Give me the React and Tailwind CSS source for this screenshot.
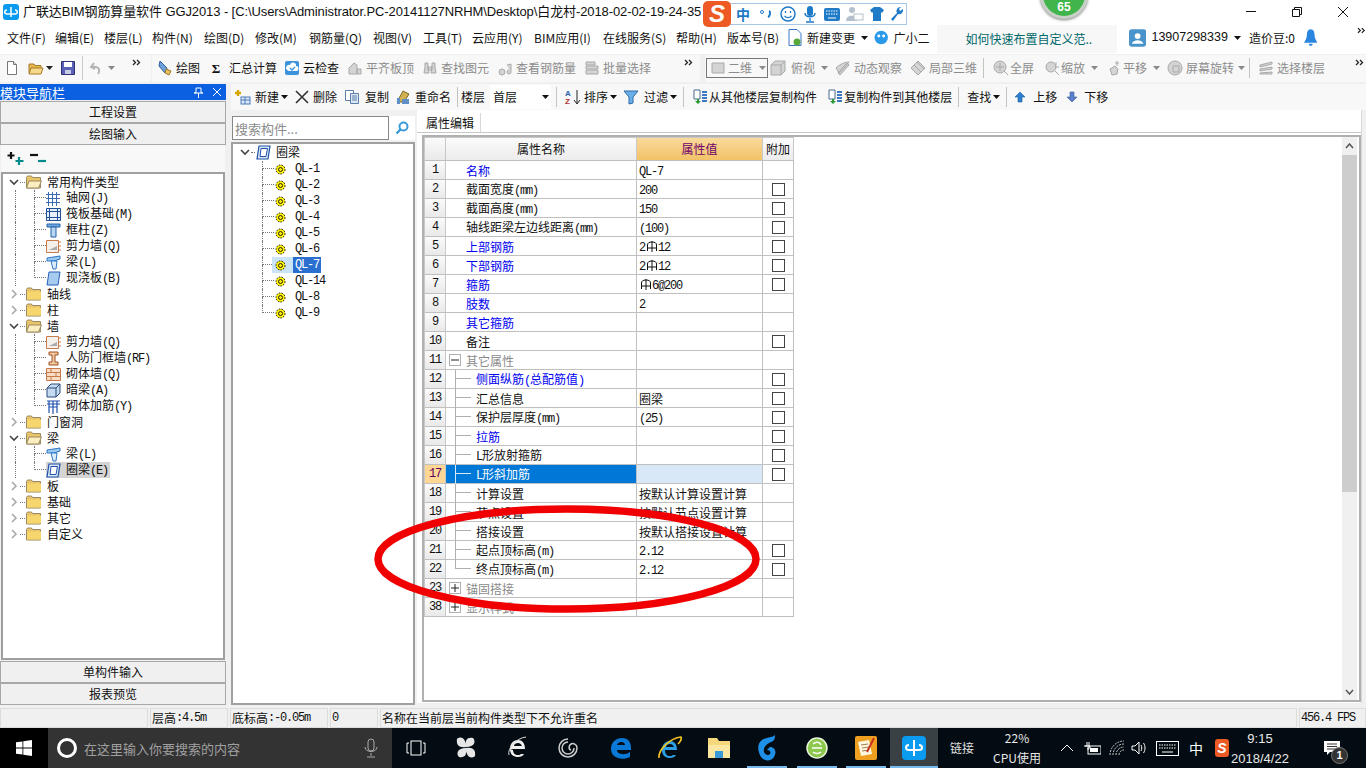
import { Fragment } from 'react'

// ascii runs in the tree and grid are a bitmap-like 6px mono
function Sim({ text }) {
  return text.split(/([\x20-\x7e]+)/).map((part, i) =>
    /^[\x20-\x7e]+$/.test(part)
      ? <span key={i} className="font-['Liberation_Mono'] text-[12px] tracking-[-1.2px] whitespace-pre">{part}</span>
      : <Fragment key={i}>{part}</Fragment>
  )
}

const Arrow = ({ className = '' }) => (
  <svg width="7" height="4" viewBox="0 0 7 4" className={`shrink-0 ${className}`}><path d="M0 0h7L3.5 4z" fill="currentColor" /></svg>
)
const More = ({ className = '' }) => (
  <svg width="9" height="7" viewBox="0 0 9 7" className={className}><path d="M1 1l2.5 2.5L1 6M5 1l2.5 2.5L5 6" fill="none" stroke="#222" strokeWidth="1.3" /></svg>
)
const Sep = ({ className = '' }) => <span className={`h-[20px] w-px bg-[#c4c4c4] shrink-0 ${className}`} />

// toolbar icons
const Ic = ({ children, s = 16 }) => <svg width={s} height={s} viewBox="0 0 16 16" className="shrink-0">{children}</svg>
const NewDoc = () => <Ic><path d="M3.5 1.5h6l3 3v10h-9z" fill="#fff" stroke="#777" /><path d="M9.5 1.5v3h3" fill="#ddd" stroke="#777" /></Ic>
const OpenDir = () => <Ic><path d="M1 4h5l1 1.5h6V13H1z" fill="#e6b64c" stroke="#a67c2a" /><path d="M3 8h12l-2 6H1z" fill="#f7d98b" stroke="#a67c2a" /></Ic>
const Save = () => <Ic><path d="M1.5 1.5h13v13h-13z" fill="#5a62b8" stroke="#2e3378" /><path d="M4 2h8v5H4z" fill="#fff" /><path d="M5 10h6v4H5z" fill="#c8cbe6" /></Ic>
const Undo = () => <Ic><path d="M5 3L2 7l4 2M3 7c6-1 9 2 6 7" fill="none" stroke="#b5b5b5" strokeWidth="2" /></Ic>
const Draw = () => <Ic><path d="M3 1l7 7-2 5-6-7z" fill="#6f9fd8" stroke="#2f5f9e" /><path d="M9 9l5 2-2 4-4-2z" fill="#e8c060" stroke="#9b7a2a" /></Ic>
const Cloud = () => <Ic><rect x="1" y="1" width="14" height="14" rx="2" fill="#3a93dc" /><path d="M3 10a3 3 0 013-5 3 3 0 016 1 2.500 2.500 0 010 5H5z" fill="#fff" /><path d="M6 8l2 2 3-3" fill="none" stroke="#3a93dc" strokeWidth="1.4" /></Ic>
const Gray = ({ d }) => <Ic><path d={d} fill="#d4d4d4" stroke="#a9a9a9" /></Ic>
const G = {
  align: 'M2 14V8l5-5 3 2v9zM10 9h4v5h-4z',
  bino: 'M3 3h3v4l1 6H2l1-6zM10 3h3v4l1 6H9l1-6zM6 7h4v3H6z',
  look: 'M2 12a3 3 0 116 0 3 3 0 01-6 0zM10 5l4-1v8a2 2 0 11-2-2',
  batch: 'M2 2h9v3H2zM2 6h12v3H2zM2 10h12v4H2z',
  flat: 'M2 3h12v10H2z',
  cube: 'M1 5l4-4h10v10l-4 4H1zM1 5h10v10M11 5l4-4',
  orbit: 'M3 13L12 3l2 2-9 10zM1 8c4-4 9-6 13-6-3 4-6 8-10 11z',
  local: 'M8 1l7 7-7 7-7-7zM4 5l7 7M7 2l7 7',
  full: 'M7 1a6 6 0 110 12A6 6 0 017 1zM7 3v8M3 7h8M11 11l4 4',
  zoom: 'M7 2a5 5 0 110 10A5 5 0 017 2zM11 11l4 4M12 2v3M11 7h4',
  pan: 'M11 1v5M9 3h4M4 9l5-3 3 3-1 5-5 1z',
  rot: 'M8 1a7 7 0 110 14A7 7 0 018 1zM6 6h6v6H6z',
  floor: 'M2 5l12-3v2L2 7zM2 9l12-2v2L2 11zM2 13l12-1v2H2z',
}
const AddComp = () => <Ic><path d="M3 1v6M0 4h6" stroke="#d8a400" strokeWidth="2.400" /><rect x="6" y="8" width="9" height="7" fill="#dfe9f7" stroke="#4a7ab8" /><path d="M6 11h9M10 8v7" stroke="#4a7ab8" /></Ic>
const Copy = () => <Ic><path d="M1.500 1.500h8v10h-8z" fill="#fff" stroke="#5b7fa8" /><path d="M6.500 4.500h8v10h-8z" fill="#dce8f5" stroke="#5b7fa8" /><path d="M8 7h5M8 9h5M8 11h5" stroke="#5b7fa8" /></Ic>
const Rename = () => <Ic><path d="M2 13l6-11 6 3-5 8z" fill="#d2b050" stroke="#7b6a2a" /><path d="M2 9h3v6H2zM7 10h7v5H7z" fill="#5f8fc8" /></Ic>
const Sort = () => <Ic><text x="0" y="7" fontSize="8" fontWeight="700" fill="#2a5fb0" fontFamily="Liberation Sans">A</text><text x="0" y="15" fontSize="8" fontWeight="700" fill="#b03030" fontFamily="Liberation Sans">Z</text><path d="M12 1v13M9 11l3 4 3-4" fill="none" stroke="#222" /></Ic>
const Filter = () => <Ic><path d="M1 2h14L10 8v6l-4 1V8z" fill="#6ab0e8" stroke="#2c6aa8" /></Ic>
const CopyFloor = () => <Ic><path d="M2 1h6v9H2z" fill="#fff" stroke="#4a6a90" /><path d="M3 12l3 3 3-3H7v-2H5v2z" fill="#2f9a3c" /><path d="M10 3h5M10 6h5M10 9h5M10 12h5" stroke="#3c78c4" strokeWidth="2" /></Ic>
const Up = () => <Ic><path d="M8 3l5 5h-3v5H6V8H3z" fill="#2d7fd0" stroke="#1c5a9c" strokeWidth=".6" /></Ic>
const Down = () => <Ic><path d="M6 3h4v5h3l-5 5-5-5h3z" fill="#5c80cc" stroke="#3a5a9c" strokeWidth=".6" /></Ic>

// tree icons
const Folder = ({ open }) => (
  <svg width="16" height="14" viewBox="0 0 16 14" className="shrink-0">
    <path d="M.500 2.500l1-1.500h4l1 1.500h8V13H.500z" fill="#e8c46a" stroke="#9c8a60" />
    {open ? <path d="M3 6h12.500l-3 7H.500z" fill="#fbeec0" stroke="#9c8a60" /> : <path d="M1 4.500h14V12.500H1z" fill="#f8d66e" />}
  </svg>
)
const Chevron = ({ open }) => (
  <svg width="10" height="10" viewBox="0 0 10 10" className="shrink-0">
    {open ? <path d="M1 3l4 4 4-4" fill="none" stroke="#444" strokeWidth="1.600" /> : <path d="M3 1l4 4-4 4" fill="none" stroke="#aaa" strokeWidth="1.600" />}
  </svg>
)
const T = ({ children }) => <svg width="15" height="15" viewBox="0 0 15 15" className="shrink-0">{children}</svg>
const TI = {
  grid: <T><path d="M0 3.500h14M0 7.500h14M0 11.500h14M2.500 1v14M6.500 1v14M10.500 1v14" stroke="#3a6ab0" strokeWidth="1" /></T>,
  raft: <T><path d="M.500 1.500h14v12H.500zM3.500 1.500v12M11.500 1.500v12M.500 4.500h14M.500 10.500h14" fill="#e5eef9" stroke="#1f4f96" /></T>,
  col: <T><path d="M1 1h13v3H1z" fill="#6fa8e0" stroke="#2560a8" /><path d="M5 4h5v10H5z" fill="#b8d6f2" stroke="#2560a8" /></T>,
  wall: <T><path d="M.500 1.500h12v12H.500z" fill="#f4f0ea" stroke="#c87a4a" /><path d="M3 11h8V7z" fill="#aaa" /><path d="M13 3h2M13 7h2M13 11h2" stroke="#c87a4a" /></T>,
  beam: <T><path d="M1 3l13-2v3L8 6l-7 0z" fill="#9cc8ee" stroke="#2c78c8" /><path d="M5 6h6l-1 8H7z" fill="#dcecfa" stroke="#2c78c8" /></T>,
  slab: <T><path d="M3 1h11l-2 13H1z" fill="#a8ccf0" stroke="#2560b8" /></T>,
  door: <T><path d="M3 1h9v3H9v7h3v3H3v-3h3V4H3z" fill="#f0c8a0" stroke="#a05020" /></T>,
  brick: <T><path d="M.500 1.500h14v12H.500z" fill="#f8dcc4" stroke="#c87a4a" /><path d="M.500 5.500h14M.500 9.500h14M5 1.500v4M10 5.500v4M5 9.500v4" stroke="#c87a4a" /></T>,
  dark: <T><path d="M1 5l4-4h9v9l-4 4H1z" fill="#c4daf0" stroke="#2a4a78" /><path d="M1 5h9v9M10 5l4-4" fill="none" stroke="#2a4a78" /></T>,
  rebar: <T><path d="M1 2h13M7 2v13M3 2v6h8V2M1 5h13M3 8v6M11 8v6" fill="none" stroke="#1f50b0" strokeWidth="1.200" /></T>,
  ring: <T><path d="M3 1h11l-2 13H1z" fill="#d8e8f8" stroke="#2050a8" strokeWidth="1.200" /><path d="M5 3.500h6.500L10 11.500H4z" fill="#fff" stroke="#2050a8" /></T>,
}

const Gear = () => (
  <svg width="11" height="11" viewBox="0 0 11 11" className="shrink-0">
    <circle cx="5.500" cy="5.500" r="4.500" fill="#fff000" stroke="#111" strokeDasharray="1.500 1.200" />
    <circle cx="5.500" cy="5.500" r="2" fill="#fff000" stroke="#222" />
  </svg>
)

function Tick({ last }) {
  return (
    <span className="flex flex-col h-full shrink-0 w-[12px]">
      <span className="h-1/2 border-l border-b border-dotted border-[#777]" />
      <span className={`h-1/2 border-dotted border-[#777] ${last ? '' : 'border-l'}`} />
    </span>
  )
}

const navTree = [
  { t: '常用构件类型', open: true, kids: [['轴网(J)', 'grid'], ['筏板基础(M)', 'raft'], ['框柱(Z)', 'col'], ['剪力墙(Q)', 'wall'], ['梁(L)', 'beam'], ['现浇板(B)', 'slab']] },
  { t: '轴线' },
  { t: '柱' },
  { t: '墙', open: true, kids: [['剪力墙(Q)', 'wall'], ['人防门框墙(RF)', 'door'], ['砌体墙(Q)', 'brick'], ['暗梁(A)', 'dark'], ['砌体加筋(Y)', 'rebar']] },
  { t: '门窗洞' },
  { t: '梁', open: true, kids: [['梁(L)', 'beam'], ['圈梁(E)', 'ring', true]] },
  { t: '板' },
  { t: '基础' },
  { t: '其它' },
  { t: '自定义' },
]

function NavTree() {
  return navTree.map(p => (
    <Fragment key={p.t}>
      <div className="flex items-center h-4 pl-[6px]">
        <Chevron open={p.open} />
        <span className="w-[5px] h-px border-t border-dotted border-[#777] mx-[1px]" />
        <Folder open={p.open} />
        <span className="ml-[5px]">{p.t}</span>
      </div>
      {p.kids && p.kids.map(([t, ic, sel], i) => (
        <div key={t + i} className="flex items-center h-4 pl-[12px]">
          <span className="w-[19px] h-full border-l border-dotted border-[#777] shrink-0" />
          <Tick last={i === p.kids.length - 1} />
          <span className={`flex items-center h-4 pr-[2px] ${sel ? 'bg-[#d4d4d4]' : ''}`}>
            {TI[ic]}
            <span className="ml-[5px]"><Sim text={t} /></span>
          </span>
        </div>
      ))}
    </Fragment>
  ))
}

const qls = ['QL-1', 'QL-2', 'QL-3', 'QL-4', 'QL-5', 'QL-6', 'QL-7', 'QL-14', 'QL-8', 'QL-9']

// n, name, value, colour, checkbox, tree mode
const rows = [
  ['1', '名称', 'QL-7', 'b', 0],
  ['2', '截面宽度(mm)', '200', '', 1],
  ['3', '截面高度(mm)', '150', '', 1],
  ['4', '轴线距梁左边线距离(mm)', '(100)', '', 1],
  ['5', '上部钢筋', '2⌀12', 'b', 1],
  ['6', '下部钢筋', '2⌀12', 'b', 1],
  ['7', '箍筋', '⌀6@200', 'b', 1],
  ['8', '肢数', '2', 'b', 0],
  ['9', '其它箍筋', '', 'b', 0],
  ['10', '备注', '', '', 1],
  ['11', '其它属性', '', 'g', 0, 'minus'],
  ['12', '侧面纵筋(总配筋值)', '', 'b', 1, 'tree'],
  ['13', '汇总信息', '圈梁', '', 1, 'tree'],
  ['14', '保护层厚度(mm)', '(25)', '', 1, 'tree'],
  ['15', '拉筋', '', 'b', 1, 'tree'],
  ['16', 'L形放射箍筋', '', '', 1, 'tree'],
  ['17', 'L形斜加筋', '', 'sel', 1, 'tree'],
  ['18', '计算设置', '按默认计算设置计算', '', 0, 'tree'],
  ['19', '节点设置', '按默认节点设置计算', '', 0, 'tree'],
  ['20', '搭接设置', '按默认搭接设置计算', '', 0, 'tree'],
  ['21', '起点顶标高(m)', '2.12', '', 1, 'tree'],
  ['22', '终点顶标高(m)', '2.12', '', 1, 'end'],
  ['23', '锚固搭接', '', 'g', 0, 'plus'],
  ['38', '显示样式', '', 'g', 0, 'plus'],
]

function Rebar() {
  return <svg width="10" height="11" viewBox="0 0 10 11" className="inline-block align-[-1px] ml-[2px] mr-[1px]"><path d="M5 0v11M.500 4a4.500 3 0 019 0v3H.500zM.500 7v3M9.500 7v3" fill="none" stroke="#111" /></svg>
}

function Value({ text }) {
  if (text.includes('⌀')) {
    const [a, b] = text.split('⌀')
    return <><Sim text={a} /><Rebar /><Sim text={b} /></>
  }
  return <Sim text={text} />
}

function Row({ r }) {
  const [n, name, val, kind, check, mode] = r
  const sel = kind === 'sel'
  const nameColor = kind === 'b' ? 'text-[#0000f0]' : kind === 'g' ? 'text-[#8a8a8a]' : sel ? 'text-white' : 'text-[#111]'
  return (
    <div className="flex h-[19px] border-b border-[#c0c0c0]">
      <div className={`w-[21px] shrink-0 flex items-center justify-center border-r border-[#c8c8c8] text-[12px] ${sel ? 'bg-[#ffd694] text-[#5a0060]' : 'bg-gradient-to-b from-[#fbfbfb] to-[#e9e9e9]'}`}><Sim text={n} /></div>
      <div className={`w-[191px] shrink-0 flex items-center border-r border-[#c0c0c0] ${sel ? 'bg-[#0078d7]' : ''}`}>
        {mode === 'minus' || mode === 'plus' ? (
          <span className="w-[12px] h-[12px] ml-[3px] mr-[5px] border border-[#b0b0b0] bg-white flex items-center justify-center shrink-0">
            <svg width="8" height="8" viewBox="0 0 8 8"><path d={mode === 'minus' ? 'M0 4h8' : 'M0 4h8M4 0v8'} stroke="#222" /></svg>
          </span>
        ) : mode === 'tree' || mode === 'end' ? (
          <span className="flex flex-col w-[21px] h-[19px] shrink-0 ml-[9px]">
            <span className={`h-[9px] w-[16px] border-l border-b ${sel ? 'border-[#d8e8f6]' : 'border-[#b0b0b0]'}`} />
            <span className={`h-[10px] ${mode === 'end' ? '' : sel ? 'border-l border-[#d8e8f6]' : 'border-l border-[#b0b0b0]'}`} />
          </span>
        ) : <span className="w-[20px] shrink-0" />}
        <span className={`whitespace-nowrap mt-[2px] ${nameColor}`}><Sim text={name} /></span>
      </div>
      <div className={`w-[126px] shrink-0 flex items-center pl-[2px] border-r border-[#c0c0c0] whitespace-pre ${sel ? 'bg-[#d8e8f6]' : ''}`}><span className="mt-[2px]"><Value text={val} /></span></div>
      <div className="w-[31px] shrink-0 flex items-center justify-center border-r border-[#c0c0c0]">
        {check ? <span className="w-[13px] h-[13px] border border-[#444] bg-white" /> : null}
      </div>
    </div>
  )
}

const menu = [
  ['文件(F)', 'w-[48px]'], ['编辑(E)', 'w-[49px]'], ['楼层(L)', 'w-[48px]'], ['构件(N)', 'w-[52px]'], ['绘图(D)', 'w-[51px]'],
  ['修改(M)', 'w-[54px]'], ['钢筋量(Q)', 'w-[64px]'], ['视图(V)', 'w-[50px]'], ['工具(T)', 'w-[49px]'], ['云应用(Y)', 'w-[62px]'],
  ['BIM应用(I)', 'w-[69px]'], ['在线服务(S)', 'w-[73px]'], ['帮助(H)', 'w-[51px]'], ['版本号(B)', 'w-[61px]'],
]

const Tool = ({ icon, text, className = '', dim, gap = 'ml-[3px]' }) => (
  <span className={`flex items-center whitespace-nowrap shrink-0 ${className} ${dim ? 'text-[#8c8c8c]' : 'text-[#111]'}`}>
    {icon}<span className={gap}>{text}</span>
  </span>
)

const Btn = ({ children, className = '' }) => (
  <div className={`shrink-0 flex items-center justify-center border border-[#a8a8a8] bg-[#f0f0f0] ${className}`}>{children}</div>
)

function Sogou() {
  return (
    <div className="absolute left-[703px] top-0 h-[28px] flex items-center">
      <div className="absolute left-0 top-[1px] w-[28px] h-[26px] rounded-[5px] bg-[#ee5a24] flex items-center justify-center text-white font-bold italic text-[24px] leading-none font-['Liberation_Sans'] z-10">S</div>
      <div className="ml-[24px] h-[22px] w-[180px] border border-[#a9c6e4] bg-white flex items-center pl-[8px] gap-[6px] text-[#1f7ac8]">
        <span className="font-bold text-[14px] w-[16px]">中</span>
        <svg width="16" height="14" viewBox="0 0 16 14"><circle cx="4" cy="5" r="1.500" fill="none" stroke="#1f7ac8" /><path d="M11 4c2 1 1 5-1 6" fill="none" stroke="#1f7ac8" strokeWidth="2" /></svg>
        <svg width="16" height="16" viewBox="0 0 16 16"><circle cx="8" cy="8" r="7" fill="none" stroke="#1f7ac8" strokeWidth="1.500" /><path d="M5.500 5v2M10.500 5v2M4.500 10c2 2 5 2 7 0" fill="none" stroke="#1f7ac8" strokeWidth="1.300" /></svg>
        <svg width="16" height="18" viewBox="0 0 16 18"><rect x="5" y="1" width="6" height="10" rx="3" fill="#1f7ac8" /><path d="M3 8c0 5 10 5 10 0M8 13v3M4 17h8" fill="none" stroke="#1f7ac8" strokeWidth="1.400" /></svg>
        <svg width="16" height="13" viewBox="0 0 16 13"><rect width="16" height="13" rx="2" fill="#1f7ac8" /><path d="M2 3h12M2 6h12" stroke="#fff" strokeDasharray="1.500 1" /><path d="M4 10h8" stroke="#fff" /></svg>
        <svg width="18" height="16" viewBox="0 0 18 16"><circle cx="6" cy="4" r="3" fill="#b5c0cc" /><path d="M0 15c0-7 11-7 11 0z" fill="#b5c0cc" /><rect x="8" y="8" width="9" height="6" fill="#fff" stroke="#b5c0cc" /></svg>
        <svg width="14" height="14" viewBox="0 0 14 14"><path d="M0 3l4-3h6l4 3-2 3-1-1v9H3V5L2 6z" fill="#1f7ac8" /></svg>
        <svg width="14" height="16" viewBox="0 0 14 16"><path d="M13 3a4 4 0 01-5 5L3 15l-2-2 6-6a4 4 0 014-6L9 3l1 2z" fill="#1f7ac8" /></svg>
      </div>
    </div>
  )
}

const TB = ({ children, run, active, className = '' }) => (
  <div className={`relative w-[48px] h-[40px] flex items-center justify-center shrink-0 ${active ? 'bg-[#3a4145]' : ''} ${className}`}>
    {children}
    {run && <span className={`absolute bottom-0 h-[2px] bg-[#76b9ed] ${active ? 'left-0 right-0' : 'left-[4px] right-[4px]'}`} />}
  </div>
)

function Taskbar() {
  return (
    <div className="h-[40px] bg-[#030c12] flex items-center text-white shrink-0 overflow-hidden">
      <div className="w-[48px] h-full bg-black flex items-center justify-center shrink-0">
        <svg width="16" height="16" viewBox="0 0 16 16"><path d="M0 2.300l6.500-.9v6.200H0zM7.300 1.300L16 0v7.600H7.300zM0 8.400h6.500v6.200L0 13.700zM7.300 8.400H16V16l-8.700-1.300z" fill="#fff" /></svg>
      </div>
      <div className="w-[344px] h-full bg-[#333] flex items-center pl-[9px] text-[13px] text-[#a0a0a0] shrink-0">
        <span className="w-[20px] h-[20px] rounded-full border-[3px] border-white shrink-0" />
        <span className="ml-[7px]">在这里输入你要搜索的内容</span>
        <svg width="14" height="20" viewBox="0 0 14 20" className="ml-auto mr-[14px]"><rect x="4" y="1" width="6" height="12" rx="3" fill="none" stroke="#aaa" /><path d="M1 9c0 6 12 6 12 0M7 15v3M3 19h8" fill="none" stroke="#aaa" /></svg>
      </div>
      <div className="w-[48px] flex justify-center shrink-0">
        <svg width="20" height="16" viewBox="0 0 20 16"><rect x="5" y="1" width="10" height="14" fill="none" stroke="#fff" /><path d="M3 3H1v10h2M17 3h2v10h-2" fill="none" stroke="#fff" /></svg>
      </div>
      <div className="ml-[2px] flex">
        <TB><svg width="22" height="24" viewBox="0 0 22 24"><path d="M11 11C4 12 1 9 2 3c3-3 9-2 9 8zM11 11c-1-7 1-10 7-9 3 3 2 9-7 9zM11 12c7-1 10 2 9 8-3 3-9 2-9-8zM11 12c1 7-1 10-7 9-3-3-2-9 7-9z" fill="#e6e6e6" /></svg></TB>
        <TB className="ml-[4px]"><svg width="24" height="26" viewBox="0 0 24 26"><path d="M4 14h15c0-6-3-9-7-9S4 8 4 14c0 6 4 8 8 8 3 0 5-1 6-3h-3c-1 1-2 1-3 1-3 0-5-2-5-5M8 11c0-2 2-3 4-3s3 1 4 3z" fill="#f0f0f0" /><path d="M3 20C1 14 10 3 20 2" fill="none" stroke="#ddd" /></svg></TB>
        <TB className="ml-[2px]"><svg width="22" height="22" viewBox="0 0 22 22"><path d="M11 2a9 9 0 109 9c0-4-4-5-6-4s-3 5 0 6M11 5a6 6 0 106 6" fill="none" stroke="#cfcfcf" strokeWidth="1.500" /></svg></TB>
        <TB className="ml-[5px]"><svg width="24" height="24" viewBox="0 0 24 24"><path d="M2 13C2 6 7 2 13 2c6 0 9 4 9 10v2H8c0 4 7 6 13 2v5c-8 4-19 1-19-8zM8 9h8c0-4-7-4-8 0z" fill="#0a78d6" /></svg></TB>
        <TB className="ml-[1px]"><svg width="26" height="26" viewBox="0 0 26 26"><path d="M5 15h15c0-6-3-9-7-9s-8 3-8 9c0 6 4 8 8 8 3 0 5-1 6-3h-3c-1 1-2 1-3 1-3 0-5-2-5-6M9 12c0-2 2-3 4-3s3 1 4 3z" fill="#2d9fe6" /><path d="M2 23C1 15 13 3 24 2c1 2-1 5-3 7" fill="none" stroke="#f3c322" strokeWidth="1.600" /></svg></TB>
        <TB className="ml-[1px]"><svg width="24" height="22" viewBox="0 0 24 22"><path d="M1 1h9l2 3h11v17H1z" fill="#f5d77c" /><path d="M1 8h22v13H1z" fill="#fbe7a2" /><path d="M8 14h8v7H8z" fill="#3a9ad9" /></svg></TB>
        <TB run><svg width="24" height="28" viewBox="0 0 24 28"><path d="M20 1c-3 3-9 2-13 5S2 14 5 21s11 7 14 2 1-10-4-10l-3 3c3 0 4 2 3 4s-5 1-6-2 1-7 5-9 6-2 6-8z" fill="#1e90e8" /></svg></TB>
        <TB run className="ml-[2px]"><svg width="24" height="28" viewBox="0 0 24 28"><circle cx="12" cy="14" r="10" fill="#8cc84b" stroke="#e8f5d8" strokeWidth="1.500" /><path d="M7 14h10M8 10c3-3 7-2 8 1M8 18c2 2 6 2 8 0" fill="none" stroke="#fff" strokeWidth="1.600" /></svg></TB>
        <TB run className="ml-[1px]"><svg width="24" height="26" viewBox="0 0 24 26"><rect x="1" y="1" width="22" height="24" rx="2" fill="#f0a020" /><path d="M4 7l11-2 3 14-11 2z" fill="#fdf6e0" /><path d="M7 10l7-1M8 13l7-1M8 16l7-1" stroke="#a08050" /><path d="M20 3l-7 14" stroke="#c83020" strokeWidth="2" /></svg></TB>
        <TB run active><svg width="24" height="24" viewBox="0 0 24 24"><rect width="24" height="24" rx="4" fill="#0a9bf0" /><path d="M12 4v16M7 9c-4 0-4 5 0 5h10c4 0 4-5 0-5" fill="none" stroke="#fff" strokeWidth="2" /></svg></TB>
      </div>
      <span className="ml-[12px] w-[26px] text-[12px] text-[#e0e0e0] whitespace-nowrap shrink-0">链接</span>
      <div className="ml-[15px] w-[52px] text-center text-[12px] leading-[20px] text-[#e8e8e8] shrink-0">
        <div>22%</div>
        <div className="whitespace-nowrap">CPU使用</div>
      </div>
      <div className="ml-[17px] flex items-center shrink-0">
        <svg width="14" height="8" viewBox="0 0 14 8"><path d="M1 7l6-6 6 6" fill="none" stroke="#fff" /></svg>
        <svg width="17" height="14" viewBox="0 0 17 14" className="ml-[10px]"><path d="M1 5h2V1M5 5V1M0 5h6v2H4v2" fill="none" stroke="#fff" /><rect x="4" y="5" width="13" height="8" fill="none" stroke="#fff" /><rect x="6" y="7" width="8" height="4" fill="#fff" /></svg>
        <svg width="16" height="16" viewBox="0 0 16 16" className="ml-[8px]"><path d="M1 15A14 14 0 0115 1M4 15A11 11 0 0115 4M7 15a8 8 0 018-8M10 15a5 5 0 015-5" fill="none" stroke="#ccc" strokeDasharray="2 1" /></svg>
        <svg width="16" height="16" viewBox="0 0 16 16" className="ml-[6px]"><path d="M1 6h3l4-4v12l-4-4H1z" fill="none" stroke="#fff" /><path d="M10 5c1 2 1 4 0 6M12.500 3c2 3 2 7 0 10" fill="none" stroke="#fff" /></svg>
        <svg width="23" height="15" viewBox="0 0 23 15" className="ml-[9px]"><rect x=".500" y=".500" width="22" height="14" fill="none" stroke="#fff" /><path d="M3 4h17M3 7h17" stroke="#fff" strokeDasharray="1.500 1" /><path d="M6 11h11" stroke="#fff" /></svg>
        <span className="ml-[10px] text-[14px]">中</span>
        <span className="ml-[12px] w-[14px] h-[18px] rounded-[3px] bg-[#ee5a24] flex items-center justify-center text-[14px] font-bold italic leading-none font-['Liberation_Sans']">S</span>
      </div>
      <div className="-ml-[1px] w-[64px] text-center text-[13px] text-[#e8e8e8] font-['Liberation_Sans'] shrink-0">
        <div className="leading-[20px] mt-[1px]">9:15</div>
        <div className="leading-[20px] whitespace-nowrap">2018/4/22</div>
      </div>
      <div className="relative ml-[32px] shrink-0">
        <svg width="16" height="16" viewBox="0 0 16 16"><path d="M0 1h16v11H6l-3 3v-3H0z" fill="#fff" /><path d="M3 4h10M3 6.500h10M3 9h10" stroke="#333" /></svg>
        <span className="absolute left-[7px] top-[7px] w-[17px] h-[17px] rounded-full bg-[#333] border border-[#777] flex items-center justify-center text-[11px] font-bold font-['Liberation_Sans']">1</span>
      </div>
    </div>
  )
}

export default function App() {
  return (
    <div className="relative w-[1366px] h-[768px] overflow-hidden flex flex-col bg-[#f0f0f0] text-[12px] leading-none text-[#111] font-['Noto_Sans_CJK_SC','Liberation_Sans',sans-serif]">
      {/* title bar */}
      <div className="h-[23px] bg-white flex items-center shrink-0 relative">
        <svg width="16" height="16" viewBox="0 0 16 16" className="ml-[3px]"><rect width="16" height="16" rx="3" fill="#0a9bf0" /><path d="M8 3v10M4 6c-3 0-3 4 0 4h8c3 0 3-4 0-4" fill="none" stroke="#fff" strokeWidth="1.500" /></svg>
        <span className="ml-[4px] text-[13px] whitespace-nowrap font-['Liberation_Sans','Noto_Sans_CJK_SC'] tracking-[-0.1px]">广联达BIM钢筋算量软件 GGJ2013 - [C:\Users\Administrator.PC-20141127NRHM\Desktop\白龙村-2018-02-02-19-24-35</span>
        <div className="absolute right-0 top-0 h-[23px] flex">
          <div className="w-[46px] flex items-center justify-center"><span className="w-[10px] h-px bg-[#111]" /></div>
          <div className="w-[46px] flex items-center justify-center"><svg width="10" height="10" viewBox="0 0 10 10"><path d="M.500 2.500h7v7h-7zM2.500 2.500v-2h7v7h-2" fill="none" stroke="#111" /></svg></div>
          <div className="w-[46px] flex items-center justify-center"><svg width="10" height="10" viewBox="0 0 10 10"><path d="M0 0l10 10M10 0L0 10" stroke="#111" /></svg></div>
        </div>
      </div>

      {/* menu */}
      <div className="h-[31px] bg-white flex items-center pl-[7px] pb-[2px] shrink-0 whitespace-nowrap">
        {menu.map(([t, w]) => <span key={t} className={`shrink-0 ${w}`}>{t}</span>)}
        <svg width="14" height="17" viewBox="0 0 14 17" className="shrink-0"><path d="M1 .500h8l4 4v12H1z" fill="#fff" stroke="#3a78c8" /><circle cx="9" cy="13" r="3.500" fill="#58a83c" /></svg>
        <span className="ml-[5px]">新建变更</span>
        <Arrow className="ml-[6px]" />
        <svg width="15" height="15" viewBox="0 0 15 15" className="ml-[6px]"><circle cx="7.500" cy="7.500" r="7" fill="#2a9ae8" /><circle cx="5" cy="6" r="1.500" fill="#fff" /><circle cx="10" cy="6" r="1.500" fill="#fff" /></svg>
        <span className="ml-[5px]">广小二</span>
        <div className="ml-[8px] w-[186px] h-[28px] bg-[#f7f7f7] rounded-[2px] flex items-center pl-[28px] text-[12px] text-[#00686a] mt-[3px]">如何快速布置自定义范..</div>
        <svg width="18" height="18" viewBox="0 0 18 18" className="ml-[12px]"><rect width="18" height="18" rx="3" fill="#4a94cc" /><circle cx="9" cy="7" r="3" fill="#fff" /><path d="M3 15c1-5 11-5 12 0z" fill="#fff" /></svg>
        <span className="ml-[5px] font-['Liberation_Sans'] text-[12.5px]">13907298339</span>
        <Arrow className="ml-[6px]" />
        <span className="ml-[8px]">造价豆:0</span>
        <svg width="14" height="18" viewBox="0 0 14 18" className="ml-[9px]"><path d="M7 0c3 0 4 3 4 6 0 4 2 6 3 8H0c1-2 3-4 3-8 0-3 1-6 4-6zM5 15h4c0 3-4 3-4 0z" fill="#2b86e0" /></svg>
        <More className="ml-[40px] mb-[14px]" />
      </div>

      {/* main toolbar */}
      <div className="h-[30px] flex items-center pb-[2px] shrink-0 whitespace-nowrap bg-[#f0f0f0]">
        <div className="w-[151px] h-[27px] bg-[#f8f8f8] rounded-r-[3px] flex items-center shrink-0 pl-[4px]">
          <NewDoc />
          <span className="ml-[8px]"><OpenDir /></span>
          <Arrow className="ml-[2px] text-[#222]" />
          <span className="ml-[7px]"><Save /></span>
          <span className="ml-[6px] h-[24px] w-px bg-[#ccc]" />
          <span className="ml-[6px]"><Undo /></span>
          <Arrow className="ml-[3px] text-[#888]" />
          <More className="ml-[17px] mb-[12px]" />
        </div>
        <div className="w-[548px] h-[27px] bg-[#f8f8f8] rounded-[3px] flex items-center shrink-0 ml-[1px] relative">
          <Tool className="ml-[5px]" icon={<Draw />} text="绘图" />
          <span className="ml-[9px] w-[14px] text-center font-bold text-[13px] font-['Liberation_Serif']">Σ</span>
          <span className="ml-[6px]">汇总计算</span>
          <Tool className="ml-[7px]" icon={<Cloud />} text="云检查" />
          <Tool className="ml-[8px]" dim icon={<Gray d={G.align} />} text="平齐板顶" />
          <Tool className="ml-[8px]" dim icon={<Gray d={G.bino} />} text="查找图元" />
          <Tool className="ml-[8px]" dim icon={<Gray d={G.look} />} text="查看钢筋量" />
          <Tool className="ml-[8px]" dim icon={<Gray d={G.batch} />} text="批量选择" />
          <More className="ml-[33px] mb-[12px]" />
        </div>
        <div className="flex-1 h-[27px] bg-[#f8f8f8] rounded-l-[3px] flex items-center ml-[5px]">
          <div className="ml-[1px] w-[62px] h-[20px] border border-[#777] flex items-center text-[#8c8c8c] shrink-0 pl-[3px]">
            <Gray d={G.flat} /><span className="ml-[2px]">二维</span><Arrow className="ml-[7px]" />
          </div>
          <Tool className="ml-[1px]" dim gap="ml-[5px]" icon={<span className="ml-[1px] block"><Gray d={G.cube} /></span>} text="俯视" />
          <Arrow className="ml-[6px] text-[#888]" />
          <Tool className="ml-[7px]" dim gap="ml-[3px]" icon={<Gray d={G.orbit} />} text="动态观察" />
          <Tool className="ml-[8px]" dim icon={<Gray d={G.local} />} text="局部三维" />
          <Sep className="ml-[6px]" />
          <Tool className="ml-[9px]" dim gap="ml-[1px]" icon={<Gray d={G.full} />} text="全屏" />
          <Tool className="ml-[10px]" dim gap="ml-[1px]" icon={<Gray d={G.zoom} />} text="缩放" />
          <Arrow className="ml-[6px] text-[#888]" />
          <Tool className="ml-[8px]" dim gap="ml-[1px]" icon={<Gray d={G.pan} />} text="平移" />
          <Arrow className="ml-[6px] text-[#888]" />
          <Tool className="ml-[7px]" dim gap="ml-[3px]" icon={<Gray d={G.rot} />} text="屏幕旋转" />
          <Arrow className="ml-[4px] text-[#888]" />
          <Sep className="ml-[4px]" />
          <Tool className="ml-[8px]" dim gap="ml-[3px]" icon={<Gray d={G.floor} />} text="选择楼层" />
          <More className="ml-[30px] mb-[12px]" />
        </div>
      </div>

      {/* body */}
      <div className="flex-1 min-h-0 flex">
        {/* module nav */}
        <div className="w-[226px] flex flex-col shrink-0 h-[621px]">
          <div className="h-[16px] bg-[#0a60e0] text-white text-[13px] flex items-center shrink-0">
            <span>模块导航栏</span>
            <svg width="9" height="11" viewBox="0 0 9 11" className="ml-auto"><path d="M2 1h5v5h2H0h2zM4.500 6v5" fill="none" stroke="#fff" /></svg>
            <svg width="8" height="8" viewBox="0 0 8 8" className="ml-[10px] mr-[5px]"><path d="M0 0l8 8M8 0L0 8" stroke="#fff" /></svg>
          </div>
          <Btn className="h-[22px] mt-px">工程设置</Btn>
          <Btn className="h-[22px]">绘图输入</Btn>
          <div className="h-[27px] flex items-center pl-[6px] gap-[6px] shrink-0 bg-[#f8f8f8] mx-[1px]">
            <svg width="17" height="15" viewBox="0 0 17 15"><path d="M4 1v7M0.500 4.500h7" stroke="#111" strokeWidth="2.200" /><path d="M12 6v8M8.500 10h8" stroke="#008a8a" strokeWidth="2.200" /></svg>
            <svg width="17" height="15" viewBox="0 0 17 15"><path d="M0 4h8" stroke="#111" strokeWidth="2.200" /><path d="M8 10h8" stroke="#008a8a" strokeWidth="2.200" /></svg>
          </div>
          <div className="flex-1 min-h-0 mx-[1px] border-2 border-[#a0a0a0] bg-white overflow-hidden">
            <NavTree />
          </div>
          <Btn className="h-[22px] mt-px">单构件输入</Btn>
          <Btn className="h-[22px]">报表预览</Btn>
        </div>

        {/* component list + editor */}
        <div className="flex-1 min-w-0 flex flex-col ml-[5px]">
          <div className="h-[26px] bg-[#f8f8f8] flex items-center whitespace-nowrap shrink-0 pl-[4px]">
            <Tool gap="ml-[4px]" icon={<AddComp />} text="新建" />
            <Arrow className="ml-[2px]" />
            <svg width="14" height="14" viewBox="0 0 14 14" className="ml-[7px]"><path d="M1 1l12 12M13 1L1 13" stroke="#333" strokeWidth="1.600" /></svg>
            <span className="ml-[4px]">删除</span>
            <Tool className="ml-[7px]" gap="ml-[5px]" icon={<Copy />} text="复制" />
            <Tool className="ml-[6px]" gap="ml-[4px]" icon={<Rename />} text="重命名" />
            <Sep className="ml-[6px]" />
            <span className="ml-[3px]">楼层</span>
            <div className="ml-[5px] w-[61px] h-[24px] bg-white flex items-center pl-[3px] shrink-0">首层<Arrow className="ml-auto mr-[2px]" /></div>
            <Sep className="ml-[5px]" />
            <span className="ml-[8px]"><Sort /></span>
            <span className="ml-[3px]">排序</span>
            <Arrow className="ml-[2px]" />
            <Tool className="ml-[6px]" gap="ml-[5px]" icon={<Filter />} text="过滤" />
            <Arrow className="ml-[2px]" />
            <Sep className="ml-[6px]" />
            <Tool className="ml-[8px]" gap="ml-[1px]" icon={<CopyFloor />} text="从其他楼层复制构件" />
            <Tool className="ml-[10px]" gap="ml-[1px]" icon={<CopyFloor />} text="复制构件到其他楼层" />
            <Sep className="ml-[6px]" />
            <span className="ml-[8px]">查找</span>
            <Arrow className="ml-[2px]" />
            <Sep className="ml-[6px]" />
            <Tool className="ml-[5px]" gap="ml-[5px]" icon={<Up />} text="上移" />
            <Tool className="ml-[7px]" gap="ml-[4px]" icon={<Down />} text="下移" />
          </div>

          <div className="flex-1 min-h-0 flex h-[596px] max-h-[596px]">
            {/* component tree */}
            <div className="w-[184px] flex flex-col shrink-0 mt-[4px] mb-[1px] bg-white">
              <div className="h-[28px] flex items-center shrink-0 bg-[#f0f0f0]">
                <div className="w-[157px] h-[24px] ml-px border border-[#888] bg-white flex items-center pl-[2px] text-[13px] text-[#8c8c8c]">搜索构件...</div>
                <div className="flex-1 h-[24px] bg-white flex items-center justify-center">
                  <svg width="14" height="14" viewBox="0 0 14 14"><circle cx="8.500" cy="5.500" r="4" fill="#fff" stroke="#3a9ad9" strokeWidth="2" /><path d="M5.500 8.500L1.500 12.500" stroke="#3a9ad9" strokeWidth="2.400" /></svg>
                </div>
              </div>
              <div className="flex-1 min-h-0 border-2 border-[#a0a0a0]">
                <div className="flex items-center h-[16px] pl-[7px] mb-[1px]">
                  <Chevron open />
                  <span className="w-[4px] border-t border-dotted border-[#777] mx-[1px]" />
                  <span className="shrink-0">{TI.ring}</span>
                  <span className="ml-[5px]">圈梁</span>
                </div>
                {qls.map((q, i) => (
                  <div key={q} className="flex items-center h-[16px] pl-[29px]">
                    <Tick last={i === qls.length - 1} />
                    <span className={`flex items-center h-[16px] pr-[7px] shrink-0 ${q === 'QL-7' ? 'bg-[#cce4f7] -ml-[2px] pl-[3px]' : 'pl-[1px]'}`}><Gear /></span>
                    <span className={`flex items-center h-[16px] ${q === 'QL-7' ? 'bg-[#2a6fcf] text-white pl-[2px] w-[28px]' : 'pl-[2px]'}`}><Sim text={q} /></span>
                  </div>
                ))}
              </div>
            </div>

            {/* property editor */}
            <div className="flex-1 min-w-0 flex flex-col ml-[2px] mb-[3px] mr-[4px] bg-white border-r border-[#d8d8d8]">
              <div className="h-[23px] flex items-end shrink-0 border-b border-[#c8c8c8]">
                <div className="ml-[2px] w-[62px] h-[19px] bg-white flex items-center pl-[7px] text-[12px] border-r border-[#d8d8d8]">属性编辑</div>
              </div>
              <div className="ml-[5px] mt-[2px] mb-[1px] flex-1 min-h-0 flex border-2 border-[#b0b0b0]">
                <div className="flex-1 min-w-0">
                  <div className="w-[370px] border-t border-[#c8c8c8] border-l">
                    <div className="flex h-[23px] border-b border-[#c0c0c0]">
                      <div className="w-[21px] shrink-0 border-r border-[#c8c8c8] bg-gradient-to-b from-[#fbfbfb] to-[#e9e9e9]" />
                      <div className="w-[191px] shrink-0 border-r border-[#c8c8c8] flex items-center justify-center bg-gradient-to-b from-[#fbfbfb] to-[#ececec]">属性名称</div>
                      <div className="w-[126px] shrink-0 border-r border-[#c8c8c8] flex items-center justify-center bg-gradient-to-b from-[#fad99c] to-[#f2c265] text-[#70006a]">属性值</div>
                      <div className="w-[31px] shrink-0 border-r border-[#c8c8c8] flex items-center justify-center bg-gradient-to-b from-[#fbfbfb] to-[#ececec]">附加</div>
                    </div>
                    {rows.map(r => <Row key={r[0]} r={r} />)}
                  </div>
                </div>
                <div className="w-[15px] mr-[2px] shrink-0 bg-[#f0f0f0] flex flex-col items-center">
                  <div className="h-[18px] flex items-center justify-center shrink-0">
                    <svg width="9" height="6" viewBox="0 0 9 6"><path d="M1 5l3.500-4L8 5" fill="none" stroke="#555" strokeWidth="1.500" /></svg>
                  </div>
                  <div className="w-full h-[337px] bg-[#cdcdcd] shrink-0" />
                  <div className="mt-auto h-[17px] flex items-center justify-center shrink-0 w-full">
                    <svg width="9" height="6" viewBox="0 0 9 6"><path d="M1 1l3.500 4L8 1" fill="none" stroke="#555" strokeWidth="1.500" /></svg>
                  </div>
                </div>
              </div>
            </div>
          </div>
        </div>
      </div>

      {/* status bar */}
      <div className="h-[20px] flex gap-[2px] shrink-0 bg-[#f0f0f0] whitespace-nowrap">
        <div className="w-[148px] border border-[#dcdcdc]" />
        <div className="w-[78px] border border-[#dcdcdc] flex items-center pl-[1px]"><Sim text="层高:4.5m" /></div>
        <div className="w-[98px] border border-[#dcdcdc] flex items-center pl-[1px]"><Sim text="底标高:-0.05m" /></div>
        <div className="w-[48px] border border-[#dcdcdc] flex items-center pl-[1px]"><Sim text="0" /></div>
        <div className="w-[917px] border border-[#dcdcdc] flex items-center pl-[1px]">名称在当前层当前构件类型下不允许重名</div>
        <div className="flex-1 border border-[#dcdcdc] flex items-center pl-[1px]"><Sim text="456.4 FPS" /></div>
      </div>

      <Taskbar />

      {/* floating overlays */}
      <Sogou />
      <div className="absolute left-[1040px] top-[-29px] w-[48px] h-[48px] rounded-full bg-[#3fb54b] border-[3px] border-[#c8d0c8] shadow-[0_1px_3px_rgba(0,0,0,.5)] flex items-end justify-center pb-[3px] text-white text-[12px] font-bold font-['Liberation_Sans']">65</div>

      {/* hand-drawn red ring */}
      <svg width="400" height="120" viewBox="0 0 400 120" className="absolute left-[367px] top-[499px] pointer-events-none">
        <ellipse cx="200" cy="60" rx="189" ry="50" fill="none" stroke="#f00000" strokeWidth="7.500" />
      </svg>
    </div>
  )
}
